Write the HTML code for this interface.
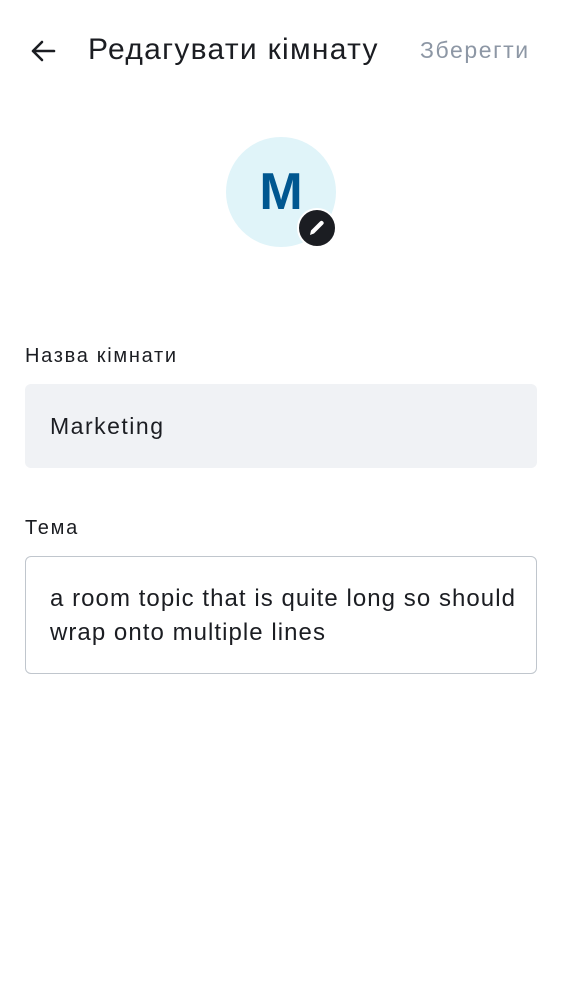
<!DOCTYPE html>
<html><head><meta charset="utf-8"><style>
body{margin:0;width:562px;height:1000px;background:#fff;font-family:"Liberation Sans",sans-serif;color:#1b1d22;position:relative;overflow:hidden}
.a{position:absolute;white-space:nowrap}
</style></head><body>
<svg class="a" style="left:28px;top:36px" width="30" height="30" viewBox="0 0 30 30"><path d="M26 15H5M14 6L5 15L14 24" fill="none" stroke="#1b1d22" stroke-width="2.6" stroke-linecap="round" stroke-linejoin="round"/></svg>
<div class="a" style="left:88px;top:30px;font-size:30px;line-height:40px;font-weight:500;letter-spacing:1.3px">Редагувати кімнату</div>
<div class="a" style="left:420px;top:35px;font-size:23px;line-height:30px;color:#8d97a5;font-weight:500;letter-spacing:1.6px">Зберегти</div>
<div class="a" style="left:226px;top:137px;width:110px;height:110px;border-radius:50%;background:#e0f4f9;color:#005790;font-size:52px;font-weight:bold;text-align:center;line-height:110px">M</div>
<div class="a" style="left:297px;top:208px;width:40px;height:40px;border-radius:50%;background:#1b1d22;box-sizing:border-box;border:2px solid #fff"></div>
<svg class="a" style="left:306px;top:217px" width="22" height="22" viewBox="0 0 22 22"><path d="M4 18L5 13.5L14 4.5Q15.5 3 17 4.5Q18.5 6 17 7.5L8 16.5Z" fill="#fff"/></svg>
<div class="a" style="left:25px;top:343px;font-size:20px;line-height:26px;letter-spacing:1.7px">Назва кімнати</div>
<div class="a" style="left:25px;top:384px;width:512px;height:84px;background:#f0f2f5;border-radius:6px"></div>
<div class="a" style="left:50px;top:410px;font-size:23px;line-height:32px;letter-spacing:1.5px">Marketing</div>
<div class="a" style="left:25px;top:515px;font-size:20px;line-height:26px;letter-spacing:1.7px">Тема</div>
<div class="a" style="left:25px;top:556px;width:512px;height:118px;border:1.5px solid #c0c6cd;border-radius:6px;box-sizing:border-box"></div>
<div class="a" style="left:50px;top:582px;font-size:24px;line-height:34px;letter-spacing:1.05px">a room topic that is quite long so should<br>wrap onto multiple lines</div>
</body></html>
